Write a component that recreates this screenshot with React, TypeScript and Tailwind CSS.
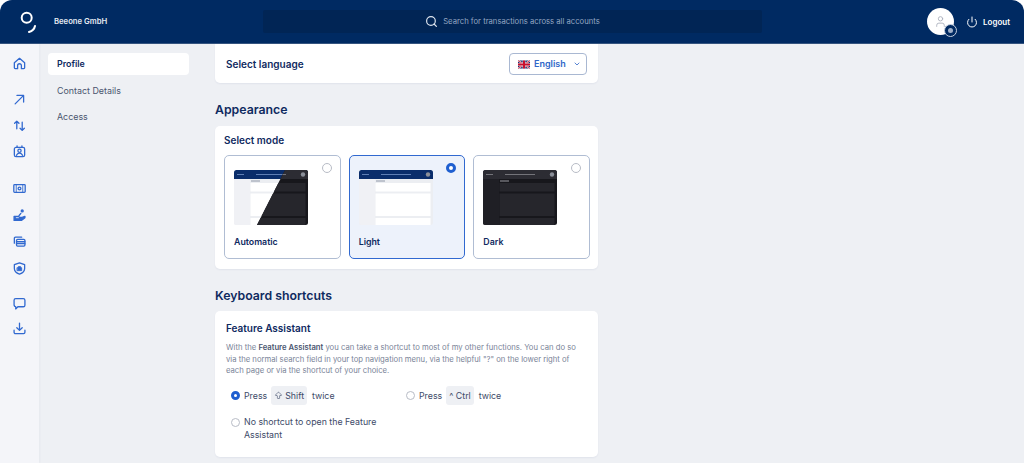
import React from "react";
import { Search, Power, ChevronDown, ArrowBigUp, User } from "lucide-react";

const BLUE = "#3169d0";

const ic = { fill: "none", stroke: BLUE, strokeWidth: 2.4, strokeLinecap: "round" as const, strokeLinejoin: "round" as const, viewBox: "0 0 24 24", width: 13, height: 13 };

function Home() {
  return (
    <svg {...ic}>
      <path d="M2.5 10.5 12 2.5l9.5 8V20a1.5 1.5 0 0 1-1.5 1.5h-4.5V16a3.5 3.5 0 0 0-7 0v5.5H4A1.5 1.500 0 0 1 2.5 20z" />
    </svg>
  );
}
function Arrow() {
  return (
    <svg {...ic} width={11} height={11} strokeWidth={2.8}>
      <path d="M2.5 21.5 21 3M6.5 3H21v14.5" />
    </svg>
  );
}
function Swap() {
  return (
    <svg {...ic}>
      <path d="M7 18V4M3 8l4-4 4 4" />
      <path d="M17 6v15M13 17l4 4 4-4" />
    </svg>
  );
}
function BadgeIcon() {
  return (
    <svg {...ic}>
      <rect x="2.5" y="4.5" width="19" height="17" rx="3" />
      <path d="M7.5 1.5v3M16.5 1.5v3" />
      <circle cx="12" cy="10.5" r="3" />
      <path d="M6.5 19c1-3 3-4 5.5-4s4.5 1 5.5 4" />
    </svg>
  );
}
function Cash() {
  return (
    <svg {...ic}>
      <rect x="1.5" y="5" width="21" height="14" rx="1.5" />
      <circle cx="12" cy="12" r="2.6" />
      <path d="M6 5v14M18 5v14" strokeWidth="1.6" />
    </svg>
  );
}
function HandCoin() {
  return (
    <svg {...ic}>
      <circle cx="17" cy="3.5" r="1.8" fill={BLUE} />
      <path d="M14.5 8 11 12.5" />
      <path d="M2 13.5h7l3 2h5l5-2v2.5l-6 5H2z" fill={BLUE} />
      <path d="M6 16h4" stroke="#f4f5f9" strokeWidth="1.5" />
    </svg>
  );
}
function Cards() {
  return (
    <svg {...ic}>
      <path d="M2.5 15V6a2 2 0 0 1 2-2H16" />
      <rect x="6.5" y="8" width="15.5" height="12.5" rx="2" />
      <path d="M6.5 12.5H22M6.5 16H22" />
    </svg>
  );
}
function Shield() {
  return (
    <svg {...ic}>
      <path d="M12 1.5 21.5 5v7c0 5-4 8.5-9.5 10.5C6.5 20.5 2.5 17 2.5 12V5z" />
      <path d="M8 10.5h8v5.5H8zM10 10.5V8.5h4v2" fill={BLUE} strokeWidth="1.5" />
    </svg>
  );
}
function Chat() {
  return (
    <svg {...ic}>
      <path d="M5 3h14a3 3 0 0 1 3 3v9a3 3 0 0 1-3 3H9l-4 4v-4.2A3 3 0 0 1 2 15V6a3 3 0 0 1 3-3z" />
    </svg>
  );
}
function Down() {
  return (
    <svg {...ic}>
      <path d="M12 2v13M7 10.5l5 5 5-5" />
      <path d="M2 15v4a2.5 2.5 0 0 0 2.5 2.5h15A2.5 2.5 0 0 0 22 19v-4" />
    </svg>
  );
}

function ThumbLayer({ dark }: { dark: boolean }) {
  const head = dark ? "#2c2c33" : "#0a2d6b";
  const bar = dark ? "#74747a" : "#5f7fb5";
  const side = dark ? "#1f1f25" : "#f0f1f5";
  const bg = dark ? "#17171c" : "#eceef2";
  const card = dark ? "#26262c" : "#ffffff";
  return (
    <g>
      <rect width="74" height="55" fill={bg} />
      <rect y="9" width="16" height="46" fill={side} />
      <rect width="74" height="9" fill={head} />
      <rect x="3" y="4" width="7" height="1" fill={bar} />
      <rect x="22" y="4" width="30" height="1" fill={bar} />
      <circle cx="69" cy="4.5" r="2.2" fill="#8b8f99" />
      <rect x="17" y="10.5" width="9" height="1" fill={dark ? "#9a9aa0" : "#8f97a8"} />
      <rect x="16.5" y="13" width="55" height="8.5" fill={card} />
      <rect x="16.5" y="23.5" width="55" height="22.5" fill={card} />
      <rect x="16.5" y="48" width="55" height="7" fill={card} />
    </g>
  );
}

function Thumb({ kind }: { kind: "auto" | "light" | "dark" }) {
  return (
    <svg width="74" height="55" viewBox="0 0 74 55" className="block">
      <defs>
        <clipPath id={`c-${kind}`}><rect width="74" height="55" rx="2.5" /></clipPath>
        <clipPath id="diag"><path d="M51 0H74V55H23z" /></clipPath>
      </defs>
      <g clipPath={`url(#c-${kind})`}>
        <ThumbLayer dark={kind === "dark"} />
        {kind === "auto" && (
          <g clipPath="url(#diag)"><ThumbLayer dark /></g>
        )}
      </g>
    </svg>
  );
}

function Radio({ on, size = 10 }: { on?: boolean; size?: number }) {
  return on ? (
    <span className="block shrink-0 rounded-full border-[3px] border-[#1f5fd0] bg-white" style={{ width: size, height: size }} />
  ) : (
    <span className="block shrink-0 rounded-full border border-[#b8bcc6] bg-white" style={{ width: size, height: size }} />
  );
}

function Mode({ kind, label, on }: { kind: "auto" | "light" | "dark"; label: string; on?: boolean }) {
  return (
    <div className={`relative h-[104px] flex-1 rounded-[5px] border-[1.5px] pl-[9px] pt-[14px] ${on ? "border-[#3169d0] bg-[#edf2fb]" : "border-[#b0bdd3] bg-white"}`}>
      <Thumb kind={kind} />
      <div className="mt-[10px] text-[8.8px] leading-[14px] font-semibold text-[#0f2a5f]">{label}</div>
      <div className="absolute right-[8px] top-[7px]"><Radio on={on} size={10} /></div>
    </div>
  );
}

function Key({ children }: { children: React.ReactNode }) {
  return (
    <span className="ml-[4px] mr-[5px] flex h-[19px] items-center gap-[2px] rounded-[3px] bg-[#eef0f4] px-[3px] text-[8.8px] text-[#3d4a68]">{children}</span>
  );
}

function Flag() {
  return (
    <svg width="12" height="9" viewBox="0 0 60 40">
      <rect width="60" height="40" fill="#1b2a6b" />
      <path d="M0 0 60 40M60 0 0 40" stroke="#fff" strokeWidth="8" />
      <path d="M0 0 60 40M60 0 0 40" stroke="#c8102e" strokeWidth="4" />
      <path d="M30 0V40M0 20H60" stroke="#fff" strokeWidth="13" />
      <path d="M30 0V40M0 20H60" stroke="#c8102e" strokeWidth="10" />
    </svg>
  );
}

export default function App() {
  return (
    <div className="flex h-[463px] w-[1024px] flex-col overflow-hidden bg-white text-[#0f2a5f]" style={{ fontFamily: "Inter, 'Liberation Sans', sans-serif" }}>
      <header className="flex h-[44px] shrink-0 items-center rounded-t-[12px] border-b border-[#35547f] bg-[#002a62]">
        <div className="w-[54px] shrink-0 pl-[20px]">
          <svg width="16" height="24" viewBox="0 0 16 24" fill="none" stroke="#fff" strokeLinecap="round" className="block">
            <circle cx="6.7" cy="7.8" r="5" strokeWidth="2" />
            <path d="M15 16c-.6 3-2.500 5-6 6" strokeWidth="2" />
          </svg>
        </div>
        <div className="w-[209px] shrink-0 text-[7.7px] font-semibold text-[#e6ebf3]">Beeone GmbH</div>
        <div className="flex h-[23px] w-[499px] shrink-0 items-center justify-center gap-[5px] rounded-[2px] bg-[#012555]">
          <Search size={13} color="#dfe6f0" strokeWidth={2.2} />
          <span className="text-[7.7px] text-[#94a6c2]">Search for transactions across all accounts</span>
        </div>
        <div className="relative ml-[165px] flex h-[27px] w-[27px] shrink-0 items-center justify-center rounded-full bg-white">
          <User size={13} color="#a7adb9" strokeWidth={1.6} />
          <span className="absolute -bottom-[2px] -right-[3px] flex h-[13px] w-[13px] items-center justify-center rounded-full border border-[#c6d0e0] bg-[#002a62]">
            <span className="h-[5px] w-[5px] rounded-full bg-[#9fafc8]" />
          </span>
        </div>
        <Power size={12} color="#fff" strokeWidth={2} className="ml-[12px]" />
        <span className="ml-[5px] text-[8px] font-semibold text-white">Logout</span>
      </header>

      <div className="flex min-h-0 flex-1 bg-[#eef0f4]">
        <aside className="flex w-[39px] shrink-0 flex-col items-center bg-[#f4f5f9] pt-[13px] shadow-[1px_0_2px_rgba(15,42,95,0.04)]">
          <Home />
          <div className="mt-[24px]"><Arrow /></div>
          <div className="mt-[14px]"><Swap /></div>
          <div className="mt-[13px]"><BadgeIcon /></div>
          <div className="mt-[24px]"><Cash /></div>
          <div className="mt-[14px]"><HandCoin /></div>
          <div className="mt-[13px]"><Cards /></div>
          <div className="mt-[14px]"><Shield /></div>
          <div className="mt-[22px]"><Chat /></div>
          <div className="mt-[12px]"><Down /></div>
        </aside>

        <nav className="flex w-[176px] shrink-0 flex-col gap-[4.25px] pl-[9px] pt-[9px] text-[8.9px]">
          <div className="flex h-[22px] w-[141px] items-center rounded-[4px] bg-white pl-[9px] font-semibold text-[#0f2a5f]">Profile</div>
          <div className="flex h-[22px] items-center pl-[9px] text-[#4a556f]">Contact Details</div>
          <div className="flex h-[22px] items-center pl-[9px] text-[#4a556f]">Access</div>
        </nav>

        <main className="w-[383px] shrink-0">
          <section className="flex h-[39px] items-center justify-between rounded-b-[5px] bg-white pl-[11px] pr-[11px] pt-[1px] shadow-[0_1px_2px_rgba(15,42,95,0.06)]">
            <span className="text-[10px] font-semibold">Select language</span>
            <button className="flex h-[22px] w-[78px] items-center gap-[4px] rounded-[4px] border-[1.5px] border-[#a9b8d2] pl-[8px] text-[9px] font-semibold text-[#2f66c8]">
              <Flag />
              English
              <ChevronDown size={8} strokeWidth={2.4} className="ml-[3px]" />
            </button>
          </section>

          <h2 className="mt-[18px] text-[12.3px] leading-[18px] font-semibold">Appearance</h2>
          <section className="mt-[7px] h-[143px] rounded-[5px] bg-white pl-[9px] pr-[8px] pt-[8px] shadow-[0_1px_2px_rgba(15,42,95,0.06)]">
            <div className="text-[10px] leading-[13px] font-semibold">Select mode</div>
            <div className="mt-[8px] flex gap-[8px]">
              <Mode kind="auto" label="Automatic" />
              <Mode kind="light" label="Light" on />
              <Mode kind="dark" label="Dark" />
            </div>
          </section>

          <h2 className="mt-[18px] text-[12.3px] leading-[18px] font-semibold">Keyboard shortcuts</h2>
          <section className="mt-[6px] h-[146px] rounded-[5px] bg-white px-[11px] pt-[10px] shadow-[0_1px_2px_rgba(15,42,95,0.06)]">
            <div className="text-[10px] leading-[14px] font-semibold">Feature Assistant</div>
            <p className="mt-[7px] w-[362px] text-[7.7px] leading-[11.7px] text-[#7a8498]">
              With the <b className="font-semibold text-[#4a556f]">Feature Assistant</b> you can take a shortcut to most of my other functions. You can do so via the normal search field in your top navigation menu, via the helpful "?" on the lower right of each page or via the shortcut of your choice.
            </p>
            <div className="mt-[9px] grid grid-cols-[180px_1fr] text-[8.8px] text-[#3d4a68]">
              <div className="flex h-[19px] items-center pl-[5px]">
                <Radio on size={9} />
                <span className="ml-[4px]">Press</span>
                <Key><ArrowBigUp size={9} strokeWidth={1.6} />Shift</Key>
                <span>twice</span>
              </div>
              <div className="flex h-[19px] items-center">
                <Radio size={9} />
                <span className="ml-[4px]">Press</span>
                <Key>^ Ctrl</Key>
                <span>twice</span>
              </div>
              <div className="col-span-2 mt-[10px] flex pl-[5px]">
                <span className="mt-[3px]"><Radio size={9} /></span>
                <span className="ml-[4px] w-[150px] leading-[13px]">No shortcut to open the Feature Assistant</span>
              </div>
            </div>
          </section>
        </main>
      </div>
    </div>
  );
}
